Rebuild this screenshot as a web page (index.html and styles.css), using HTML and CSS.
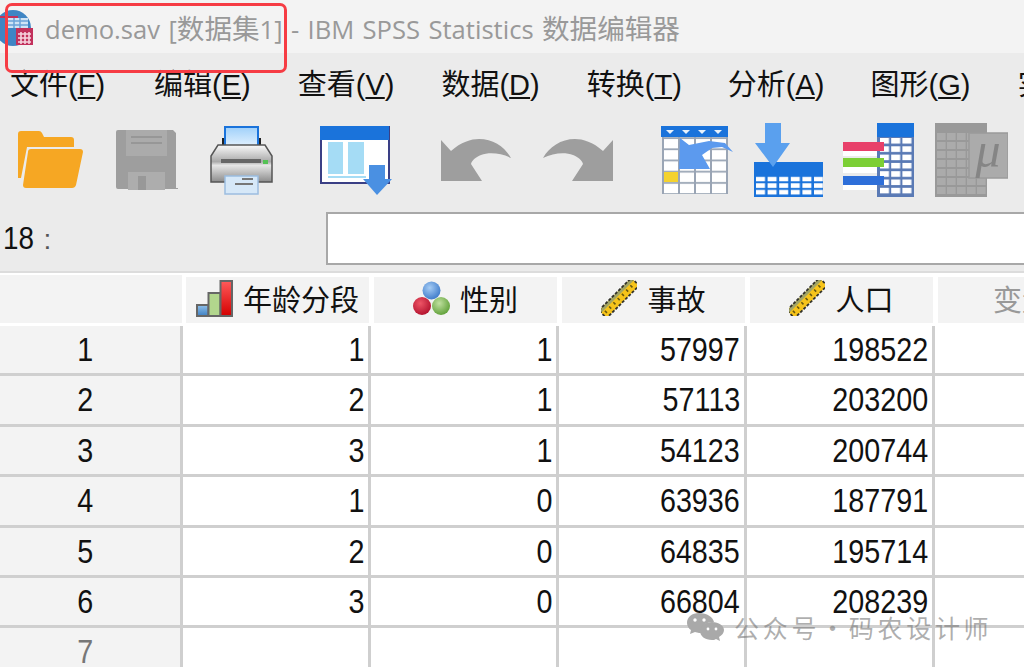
FILE: index.html
```html
<!DOCTYPE html>
<html lang="zh">
<head>
<meta charset="utf-8">
<title>demo.sav [数据集1] - IBM SPSS Statistics 数据编辑器</title>
<link rel="stylesheet" href="styles.css">
</head>
<body>
<div class="app">
  <header class="titlebar">
    <svg class="app-icon" width="33" height="40" viewBox="0 0 33 40">
      <circle cx="13" cy="19" r="18" fill="#3f85c4"/>
      <path d="M8 9h20v10H8z" fill="#cfe3f5"/>
      <path d="M8 12h20M8 16h20M14 9v10M20 9v10" stroke="#6ba3d8" stroke-width="1.5"/>
      <path d="M0 8h18" stroke="#c2315c" stroke-width="2"/>
      <rect x="16" y="19" width="17" height="17" fill="#c2315c"/>
      <path d="M18 25h13M18 29h13M18 33h13M21 23v12M25 23v12M29 23v12" stroke="#f6d3de" stroke-width="1.6"/>
    </svg>
    <span class="title-text">demo.sav [<span class="title-cjk">数据集</span>1] - IBM SPSS Statistics <span class="title-cjk">数据编辑器</span></span>
  </header>

  <nav class="menubar">
    <span class="menu-item">文件(<u>F</u>)</span>
    <span class="menu-item">编辑(<u>E</u>)</span>
    <span class="menu-item">查看(<u>V</u>)</span>
    <span class="menu-item">数据(<u>D</u>)</span>
    <span class="menu-item">转换(<u>T</u>)</span>
    <span class="menu-item">分析(<u>A</u>)</span>
    <span class="menu-item">图形(<u>G</u>)</span>
    <span class="menu-item">实用程序(<u>U</u>)</span>
  </nav>

  <div class="toolbar">
    <svg class="tool first" width="65" height="60" viewBox="0 0 65 60">
      <path d="M0 4q0-3 3-3h18q2 0 3 2l2 4h27q3 0 3 3v7H9L3 48H0z" fill="#f6a723"/>
      <path d="M10 22q0-3 3-3h49q3 0 3 3l-7 33q-1 3-4 3H8q-3 0-3-3z" fill="#f6a723"/>
    </svg>
    <svg class="tool gap-33" width="62" height="60" viewBox="0 0 62 60">
      <path d="M0 2q0-2 2-2h55l3 3v55h2v1H2q-2 0-2-2z" fill="#9e9e9e"/>
      <rect x="10" width="41" height="26" fill="#ababab"/>
      <path d="M15 7h31M15 13h31" stroke="#979797" stroke-width="2"/>
      <rect x="12" y="42" width="37" height="18" fill="#adadad"/>
      <rect x="22" y="46" width="8" height="14" fill="#989898"/>
    </svg>
    <svg class="tool gap-32" width="63" height="69" viewBox="0 0 63 69">
      <defs>
        <linearGradient id="pr-paper" x1="0" y1="0" x2="0" y2="1"><stop offset="0" stop-color="#9fd0fa"/><stop offset="1" stop-color="#f2f9ff"/></linearGradient>
        <linearGradient id="pr-body" x1="0" y1="0" x2="0" y2="1"><stop offset="0" stop-color="#fafafa"/><stop offset=".45" stop-color="#a9a9a9"/><stop offset=".55" stop-color="#e6e6e6"/><stop offset="1" stop-color="#8b8b8b"/></linearGradient>
      </defs>
      <rect x="12" y="12" width="39" height="14" fill="#222"/>
      <rect x="15" y="1" width="33" height="24" fill="url(#pr-paper)" stroke="#1a73db" stroke-width="2"/>
      <path d="M8 19h47l7 11v26H1V30z" fill="url(#pr-body)" stroke="#555" stroke-width="1.5"/>
      <rect x="11" y="33" width="40" height="4" fill="#666"/>
      <rect x="53" y="34" width="5" height="4" fill="#55c255"/>
      <rect x="15" y="50" width="33" height="18" fill="#d6e8f8" stroke="#9cbde0" stroke-width="1.5"/>
      <path d="M32 53h11M25 58h18" stroke="#777" stroke-width="2"/>
    </svg>
    <svg class="tool gap-47" width="72" height="69" viewBox="0 0 72 69">
      <rect x="1" y="1" width="68" height="56" fill="#fff" stroke="#3a3f85" stroke-width="2"/>
      <rect width="69" height="14" fill="#1a73db"/>
      <rect x="8" y="16" width="15" height="32" fill="#a5dcf5"/>
      <rect x="28" y="16" width="16" height="32" fill="#a5dcf5"/>
      <rect x="8" y="50" width="38" height="2" fill="#a5dcf5"/>
      <path d="M49 39h16v14h7L57 69 43 53h6z" fill="#4a90e2"/>
    </svg>
    <svg class="tool gap-49" width="71" height="42" viewBox="0 0 71 42">
      <path d="M0 1l10 11C20 3 30 0 38 0c14 0 26 8 32 19-10-5-22-6-30-3-5 2-9 5-10 9l11 17H0z" fill="#9e9e9e"/>
    </svg>
    <svg class="tool gap-30" width="71" height="42" viewBox="0 0 71 42">
      <path d="M71 1L61 12C51 3 41 0 33 0 19 0 7 8 1 19c10-5 22-6 30-3 5 2 9 5 10 9L30 42h41z" fill="#9e9e9e"/>
    </svg>
    <svg class="tool gap-47" width="73" height="69" viewBox="0 0 73 69">
      <defs>
        <pattern id="goto-cells" x="3" y="12" width="16" height="11.2" patternUnits="userSpaceOnUse"><rect width="16" height="12" fill="#9aa5b5"/><rect x="1" y="1" width="14" height="9.4" fill="#fff"/></pattern>
      </defs>
      <rect x="2" y="11" width="66" height="57" fill="url(#goto-cells)"/>
      <rect x="1" width="67" height="11" fill="#1a73db"/>
      <path d="M6 4h8l-4 4zM22 4h8l-4 4zM38 4h8l-4 4zM54 4h8l-4 4z" fill="#e8f2fc"/>
      <rect x="4" y="46" width="14" height="10" fill="#f4d22e"/>
      <path d="M20 12l9 7 20-4 16 2 8 9-11-5-10 1-10 7 8 14H19z" fill="#5c9aee"/>
    </svg>
    <svg class="tool gap-20" width="70" height="74" viewBox="0 0 70 74">
      <defs>
        <pattern id="ins-cells" x="3" y="53.5" width="11.6" height="6.6" patternUnits="userSpaceOnUse"><rect y=".2" width="9" height="4.6" fill="#fff"/></pattern>
      </defs>
      <rect x="1" y="39" width="69" height="35" fill="#1a73db"/>
      <rect x="3" y="53.5" width="67" height="19" fill="url(#ins-cells)"/>
      <path d="M12 0h16v20h9L20 44 2 20h10z" fill="#5aa0ee"/>
    </svg>
    <svg class="tool gap-19" width="73" height="74" viewBox="0 0 73 74">
      <defs>
        <pattern id="var-cells" x="38" y="15" width="11.2" height="8.3" patternUnits="userSpaceOnUse"><rect width="9" height="5.6" fill="#fff"/></pattern>
      </defs>
      <rect x="35" width="37" height="74" fill="#5a7ab5"/>
      <rect x="38" y="15" width="32" height="58" fill="url(#var-cells)"/>
      <rect x="35" width="37" height="14" fill="#1a73db"/>
      <rect x="1" y="28" width="34" height="5" fill="#fff"/>
      <rect x="1" y="44" width="34" height="6" fill="#fff"/>
      <rect x="1" y="62" width="34" height="5" fill="#fff"/>
      <rect x="1" y="19" width="41" height="9" fill="#e8406a"/>
      <rect x="1" y="35" width="41" height="9" fill="#7ccf35"/>
      <rect x="1" y="53" width="41" height="9" fill="#2e6fd9"/>
    </svg>
    <svg class="tool gap-20" width="73" height="74" viewBox="0 0 73 74">
      <defs>
        <pattern id="val-cells" x="2" y="10" width="10" height="9" patternUnits="userSpaceOnUse"><rect width="8.6" height="7" fill="#ababab"/></pattern>
      </defs>
      <rect width="52" height="74" fill="#999"/>
      <rect x="2" y="10" width="50" height="62" fill="url(#val-cells)"/>
      <rect x="34" y="10" width="39" height="45" fill="#ababab" stroke="#9b9b9b" stroke-width="1.5"/>
      <text class="mu" x="53" y="44">μ</text>
    </svg>
  </div>

  <div class="formula">
    <span class="cell-ref"><span class="num num-left">18</span> <span class="num-colon">:</span></span>
    <div class="formula-input"></div>
  </div>

  <main class="sheet">
    <div class="corner"></div>
    <div class="col-head">
      <svg width="37" height="37" viewBox="0 0 37 37">
        <defs>
          <linearGradient id="b1" x1="0" y1="0" x2="0" y2="1"><stop offset="0" stop-color="#8fc0ea"/><stop offset="1" stop-color="#3d7fc2"/></linearGradient>
          <linearGradient id="b3" x1="0" y1="0" x2="0" y2="1"><stop offset="0" stop-color="#ff5a5a"/><stop offset="1" stop-color="#d40000"/></linearGradient>
        </defs>
        <rect x="1" y="25" width="11.5" height="11" fill="url(#b1)" stroke="#666" stroke-width="2"/>
        <rect x="12.5" y="13" width="12" height="23" fill="#b2d68d" stroke="#666" stroke-width="2"/>
        <rect x="24.5" y="1" width="11.5" height="35" fill="url(#b3)" stroke="#666" stroke-width="2"/>
      </svg>
      <span class="head-text">年龄分段</span>
    </div>
    <div class="col-head">
      <svg width="37" height="35" viewBox="0 0 37 35">
        <defs>
          <radialGradient id="c1" cx=".4" cy=".35" r=".7"><stop offset="0" stop-color="#a5ccf5"/><stop offset="1" stop-color="#3b78c8"/></radialGradient>
          <radialGradient id="c2" cx=".4" cy=".35" r=".7"><stop offset="0" stop-color="#ee5566"/><stop offset="1" stop-color="#b0102c"/></radialGradient>
          <radialGradient id="c3" cx=".4" cy=".35" r=".7"><stop offset="0" stop-color="#c0e0a0"/><stop offset="1" stop-color="#5c9e35"/></radialGradient>
        </defs>
        <circle cx="18.5" cy="9.5" r="9" fill="url(#c1)"/>
        <circle cx="9" cy="25" r="9" fill="url(#c2)"/>
        <circle cx="28" cy="25" r="9" fill="url(#c3)"/>
      </svg>
      <span class="head-text">性别</span>
    </div>
    <div class="col-head">
      <svg width="36" height="36" viewBox="0 0 36 36">
        <g transform="rotate(-45 18 18)">
          <rect x="-5" y="12.5" width="46" height="11" fill="#f7c41a"/>
          <rect x="-5" y="12.5" width="46" height="3.5" fill="#a3a564"/>
          <rect x="-5" y="12.5" width="46" height="11" fill="none" stroke="#33332b" stroke-width="1.8" stroke-dasharray="3 1.6"/>
          <path d="M-1 17v3M5 17v3M11 17v3M17 17v3M23 17v3M29 17v3M35 17v3" stroke="#6a5a10" stroke-width="1.6"/>
        </g>
      </svg>
      <span class="head-text">事故</span>
    </div>
    <div class="col-head">
      <svg width="36" height="36" viewBox="0 0 36 36">
        <g transform="rotate(-45 18 18)">
          <rect x="-5" y="12.5" width="46" height="11" fill="#f7c41a"/>
          <rect x="-5" y="12.5" width="46" height="3.5" fill="#a3a564"/>
          <rect x="-5" y="12.5" width="46" height="11" fill="none" stroke="#33332b" stroke-width="1.8" stroke-dasharray="3 1.6"/>
          <path d="M-1 17v3M5 17v3M11 17v3M17 17v3M23 17v3M29 17v3M35 17v3" stroke="#6a5a10" stroke-width="1.6"/>
        </g>
      </svg>
      <span class="head-text">人口</span>
    </div>
    <div class="col-head col-empty"><span class="head-text">变量</span></div>

    <div class="row-head"><span class="num">1</span></div><div class="cell"><span class="num">1</span></div><div class="cell"><span class="num">1</span></div><div class="cell"><span class="num">57997</span></div><div class="cell"><span class="num">198522</span></div><div class="cell"></div>
    <div class="row-head"><span class="num">2</span></div><div class="cell"><span class="num">2</span></div><div class="cell"><span class="num">1</span></div><div class="cell"><span class="num">57113</span></div><div class="cell"><span class="num">203200</span></div><div class="cell"></div>
    <div class="row-head"><span class="num">3</span></div><div class="cell"><span class="num">3</span></div><div class="cell"><span class="num">1</span></div><div class="cell"><span class="num">54123</span></div><div class="cell"><span class="num">200744</span></div><div class="cell"></div>
    <div class="row-head"><span class="num">4</span></div><div class="cell"><span class="num">1</span></div><div class="cell"><span class="num">0</span></div><div class="cell"><span class="num">63936</span></div><div class="cell"><span class="num">187791</span></div><div class="cell"></div>
    <div class="row-head"><span class="num">5</span></div><div class="cell"><span class="num">2</span></div><div class="cell"><span class="num">0</span></div><div class="cell"><span class="num">64835</span></div><div class="cell"><span class="num">195714</span></div><div class="cell"></div>
    <div class="row-head"><span class="num">6</span></div><div class="cell"><span class="num">3</span></div><div class="cell"><span class="num">0</span></div><div class="cell"><span class="num">66804</span></div><div class="cell"><span class="num">208239</span></div><div class="cell"></div>
    <div class="row-head row-dim"><span class="num">7</span></div><div class="cell"></div><div class="cell"></div><div class="cell"></div><div class="cell"></div><div class="cell"></div>
  </main>
</div>

<div class="highlight"></div>

<div class="watermark">
  <svg width="38" height="28" viewBox="0 0 38 28">
    <path d="M12 0C5 0 0 4 0 10c0 3 2 6 4 7l-1 4 5-2c1 0 3 1 4 1h2c-1-6 5-12 13-11C26 4 20 0 12 0z" fill="#a9a9a9"/>
    <path d="M25 9c-7 0-12 4-12 9s5 9 12 9c1 0 3 0 4-1l4 2-1-4c3-2 5-4 5-7 0-4-5-8-12-8z" fill="#a9a9a9"/>
    <circle cx="8" cy="7" r="1.7" fill="#fff"/><circle cx="17" cy="7" r="1.7" fill="#fff"/>
    <circle cx="21" cy="16" r="1.4" fill="#fff"/><circle cx="29" cy="16" r="1.4" fill="#fff"/>
  </svg>
  <span>公众号·码农设计师</span>
</div>
</body>
</html>
```

FILE: styles.css
```css
* { box-sizing: border-box; }

html, body {
  margin: 0;
  height: 100%;
  overflow: hidden;
  background: #fff;
}

body {
  position: relative;
  width: 1024px;
  height: 667px;
  font-family: "Liberation Sans", "Noto Sans CJK SC", sans-serif;
  color: #111;
}

.app {
  display: flex;
  flex-direction: column;
  height: 667px;
  overflow: hidden;
}

.titlebar {
  display: flex;
  align-items: center;
  flex: none;
  height: 53px;
  padding-top: 1px;
  background: #f3f3f3;
  white-space: nowrap;
}

.app-icon { flex: none; margin: 3px 12px 0 0; }

.title-text {
  font-family: "Open Sans", "Noto Sans CJK SC", sans-serif;
  font-size: 25.6px;
  word-spacing: 1.7px;
  color: #999;
}

.title-cjk { font-size: 27.6px; }

.menubar {
  display: flex;
  flex: none;
  gap: 47px;
  height: 57px;
  padding: 14px 0 0 10px;
  background: #ebebeb;
  white-space: nowrap;
  font-size: 29px;
  line-height: 36px;
  color: #111;
}

.menu-item { flex: none; }
.menu-item:nth-child(1) { margin-right: 2px; }
.menu-item:nth-child(5),
.menu-item:nth-child(6) { margin-right: -1px; }

.toolbar {
  display: flex;
  align-items: center;
  flex: none;
  height: 100px;
  background: #ebebeb;
}

.tool { flex: none; }
.first { margin-left: 18px; }
.gap-19 { margin-left: 19px; }
.gap-20 { margin-left: 20px; }
.gap-30 { margin-left: 30px; }
.gap-32 { margin-left: 32px; }
.gap-33 { margin-left: 33px; }
.gap-47 { margin-left: 47px; }
.gap-49 { margin-left: 49px; }

.mu {
  font-family: "Liberation Serif", serif;
  font-style: italic;
  font-size: 50px;
  fill: #858585;
  text-anchor: middle;
}

.formula {
  display: flex;
  flex: none;
  height: 63px;
  padding-top: 2px;
  background: #ebebeb;
  border-bottom: 2px solid #dcdcdc;
}

.cell-ref {
  flex: none;
  width: 326px;
  padding-left: 3px;
  font-size: 32px;
  line-height: 52px;
  white-space: nowrap;
}

.num-colon {
  margin-left: -4px;
  font-size: 28px;
  color: #555;
}

.formula-input {
  flex: 1;
  height: 53px;
  background: #fff;
  border: 2px solid #a8a8a8;
  border-right: 0;
}

.sheet {
  display: grid;
  grid-template-columns: 183px repeat(5, 188px);
  grid-template-rows: 49px;
  grid-auto-rows: 50.4px;
  flex: 1;
  align-content: start;
  width: 1123px;
  padding-top: 4px;
  background: #fff;
  font-size: 29px;
}

.corner {
  margin: -2px 1px 3px 0;
  background: #f3f3f3;
}

.col-head {
  display: flex;
  align-items: center;
  justify-content: center;
  gap: 10px;
  margin: 0 2px 3px 3px;
  padding-bottom: 4px;
  background: #f3f3f3;
  white-space: nowrap;
}

.head-text { letter-spacing: 0; }

.col-empty { padding-right: 15px; color: #999; }

.row-head,
.cell {
  border-right: 3px solid #cfcfcf;
  border-bottom: 3px solid #cfcfcf;
  font-size: 33px;
  line-height: 47px;
}

.num {
  display: inline-block;
  transform: scaleX(.87);
  transform-origin: 100% 50%;
}

.num-left { transform-origin: 0 50%; }

.row-head {
  padding-right: 10px;
  background: #f3f3f3;
  text-align: center;
}

.row-head .num { transform-origin: 50% 50%; }

.row-dim { color: #777; }

.cell {
  padding-right: 4px;
  text-align: right;
}

.highlight {
  position: absolute;
  left: 5px;
  top: 3px;
  width: 282px;
  height: 70px;
  border: 3px solid #f63c44;
  border-radius: 7px;
}

.watermark {
  position: absolute;
  left: 687px;
  top: 612px;
  display: flex;
  align-items: center;
  gap: 9px;
  color: rgba(120, 120, 120, .6);
  font-family: "Noto Sans CJK SC", sans-serif;
  font-size: 25px;
  letter-spacing: 3.7px;
  line-height: 30px;
  white-space: nowrap;
}
```
